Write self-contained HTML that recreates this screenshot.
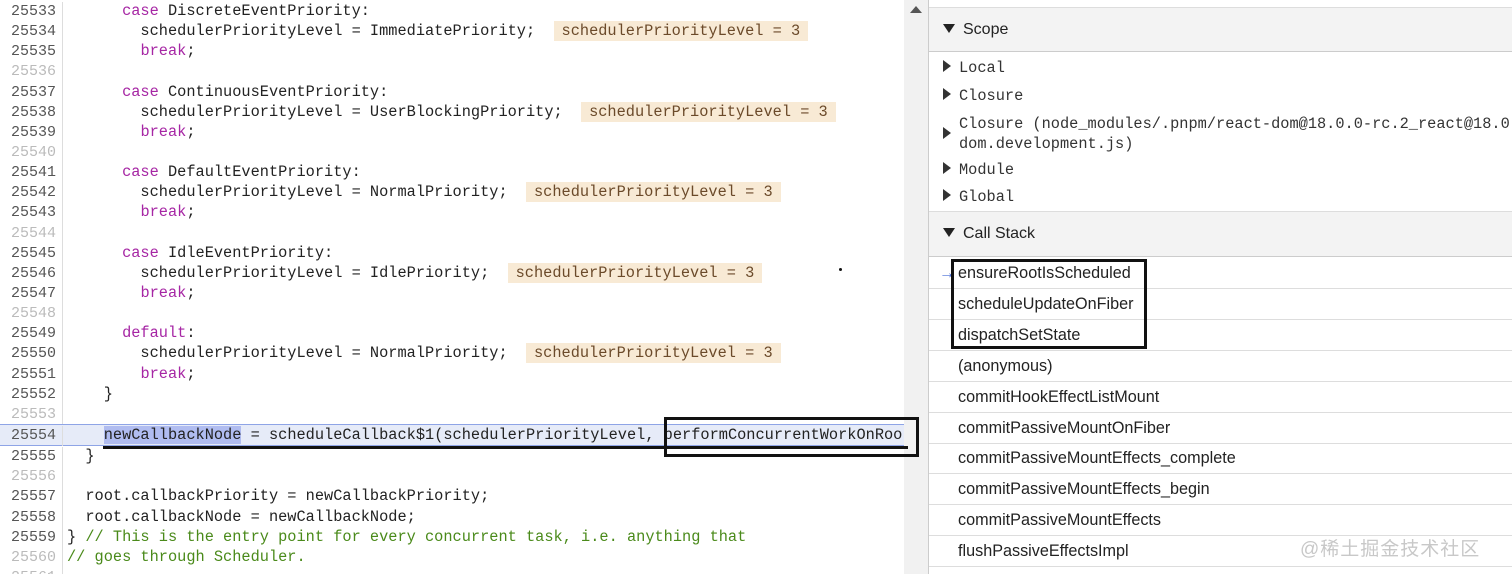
<!DOCTYPE html><html><head><meta charset="utf-8"><style>
html,body{margin:0;width:1512px;height:574px;overflow:hidden}
body{background:#fff;position:relative;font-family:"Liberation Sans",sans-serif}
#code{position:absolute;left:0;top:1px;width:904px;height:573px;overflow:hidden;font-family:"Liberation Mono",monospace;font-size:15.3px;color:#222}
.l{height:20.15px;line-height:20.15px;white-space:pre;position:relative}
.n{display:inline-block;width:56px;text-align:right;color:#555;padding-right:6px;border-right:1px solid #ddd;margin-right:4px;font-size:15px}
.e .n{color:#bbb}
.k{color:#a626a4}.c{color:#4a8a1a}
.v{background:#f8ead5;color:#6b4a2a;padding:1px 8px}
.hl{background:#e6ebf8;border-top:1px solid #8ea4e6;border-bottom:1px solid #8ea4e6}
.sel{background:#b0bcf0}
#sb{position:absolute;left:904px;top:0;width:24px;height:574px;background:#f1f1f1}
#rp{position:absolute;left:928px;top:0;width:584px;height:574px;border-left:1px solid #ccc;background:#fff}
.hd{position:absolute;left:0;width:584px;background:#f3f3f3;border-top:1px solid #ddd;border-bottom:1px solid #ccc;font-size:16px;color:#222}
.tri{display:inline-block;width:0;height:0;border-left:6px solid transparent;border-right:6px solid transparent;border-top:9px solid #222;margin:0 8px 0 14px;vertical-align:1px}
.si{position:absolute;left:14px;font-family:"Liberation Mono",monospace;font-size:15.3px;color:#333}
.rt{display:inline-block;width:0;height:0;border-top:6px solid transparent;border-bottom:6px solid transparent;border-left:8px solid #333;margin-right:8px;vertical-align:0}
.cs{position:absolute;left:0;width:584px;height:30px;border-bottom:1px solid #ddd;font-size:16.2px;line-height:30px;color:#222}
.cs span{position:absolute;left:29px}
.box{position:absolute;border:3px solid #111;box-sizing:border-box;z-index:5}
</style></head><body>
<div id="code">
<div class="l"><span class="n">25533</span>      <span class="k">case</span> DiscreteEventPriority:</div>
<div class="l"><span class="n">25534</span>        schedulerPriorityLevel = ImmediatePriority;  <span class="v">schedulerPriorityLevel = 3</span></div>
<div class="l"><span class="n">25535</span>        <span class="k">break</span>;</div>
<div class="l e"><span class="n">25536</span></div>
<div class="l"><span class="n">25537</span>      <span class="k">case</span> ContinuousEventPriority:</div>
<div class="l"><span class="n">25538</span>        schedulerPriorityLevel = UserBlockingPriority;  <span class="v">schedulerPriorityLevel = 3</span></div>
<div class="l"><span class="n">25539</span>        <span class="k">break</span>;</div>
<div class="l e"><span class="n">25540</span></div>
<div class="l"><span class="n">25541</span>      <span class="k">case</span> DefaultEventPriority:</div>
<div class="l"><span class="n">25542</span>        schedulerPriorityLevel = NormalPriority;  <span class="v">schedulerPriorityLevel = 3</span></div>
<div class="l"><span class="n">25543</span>        <span class="k">break</span>;</div>
<div class="l e"><span class="n">25544</span></div>
<div class="l"><span class="n">25545</span>      <span class="k">case</span> IdleEventPriority:</div>
<div class="l"><span class="n">25546</span>        schedulerPriorityLevel = IdlePriority;  <span class="v">schedulerPriorityLevel = 3</span></div>
<div class="l"><span class="n">25547</span>        <span class="k">break</span>;</div>
<div class="l e"><span class="n">25548</span></div>
<div class="l"><span class="n">25549</span>      <span class="k">default</span>:</div>
<div class="l"><span class="n">25550</span>        schedulerPriorityLevel = NormalPriority;  <span class="v">schedulerPriorityLevel = 3</span></div>
<div class="l"><span class="n">25551</span>        <span class="k">break</span>;</div>
<div class="l"><span class="n">25552</span>    }</div>
<div class="l e"><span class="n">25553</span></div>
<div class="l hl"><span class="n">25554</span>    <span class="sel">newCallbackNode</span> = scheduleCallback$1(schedulerPriorityLevel, performConcurrentWorkOnRoo</div>
<div class="l"><span class="n">25555</span>  }</div>
<div class="l e"><span class="n">25556</span></div>
<div class="l"><span class="n">25557</span>  root.callbackPriority = newCallbackPriority;</div>
<div class="l"><span class="n">25558</span>  root.callbackNode = newCallbackNode;</div>
<div class="l"><span class="n">25559</span>} <span class="c">// This is the entry point for every concurrent task, i.e. anything that</span></div>
<div class="l e"><span class="n">25560</span><span class="c">// goes through Scheduler.</span></div>
<div class="l e"><span class="n">25561</span></div>
</div>
<div id="sb"><div style="position:absolute;left:6px;top:6px;border-left:6px solid transparent;border-right:6px solid transparent;border-bottom:7px solid #555"></div></div>
<div style="position:absolute;left:103px;top:446px;width:805px;height:3px;background:#111;z-index:5"></div>
<div class="box" style="left:664px;top:417px;width:255px;height:40px"></div>
<div style="position:absolute;left:839px;top:268px;width:3px;height:3px;background:#111;border-radius:50%"></div>
<div id="rp">
<div class="hd" style="top:7px;height:43px;line-height:43px"><span class="tri"></span>Scope</div>
<div class="si" style="top:59px"><span class="rt"></span>Local</div>
<div class="si" style="top:87px"><span class="rt"></span>Closure</div>
<div class="si" style="top:114px;width:580px;white-space:nowrap"><span class="rt" style="position:absolute;top:13px"></span><div style="margin-left:16px;line-height:20px">Closure (node_modules/.pnpm/react-dom@18.0.0-rc.2_react@18.0<br>dom.development.js)</div></div>
<div class="si" style="top:161px"><span class="rt"></span>Module</div>
<div class="si" style="top:188px"><span class="rt"></span>Global</div>
<div class="hd" style="top:211px;height:44px;line-height:44px"><span class="tri"></span>Call Stack</div>
<div class="cs" style="top:258px"><b style="position:absolute;left:10px;color:#4a6fd8;font-weight:normal">→</b><span>ensureRootIsScheduled</span></div>
<div class="cs" style="top:289px"><span>scheduleUpdateOnFiber</span></div>
<div class="cs" style="top:320px"><span>dispatchSetState</span></div>
<div class="cs" style="top:351px"><span>(anonymous)</span></div>
<div class="cs" style="top:382px"><span>commitHookEffectListMount</span></div>
<div class="cs" style="top:413px"><span>commitPassiveMountOnFiber</span></div>
<div class="cs" style="top:443px"><span>commitPassiveMountEffects_complete</span></div>
<div class="cs" style="top:474px"><span>commitPassiveMountEffects_begin</span></div>
<div class="cs" style="top:505px"><span>commitPassiveMountEffects</span></div>
<div class="cs" style="top:536px"><span>flushPassiveEffectsImpl</span></div>
<div style="position:absolute;left:371px;top:534px;font-size:19px;letter-spacing:1px;color:#c8c8c8;font-family:'Liberation Sans','Noto Sans CJK SC',sans-serif">@稀土掘金技术社区</div>
<div class="box" style="left:22px;top:259px;width:196px;height:90px"></div>
</div>
</body></html>
